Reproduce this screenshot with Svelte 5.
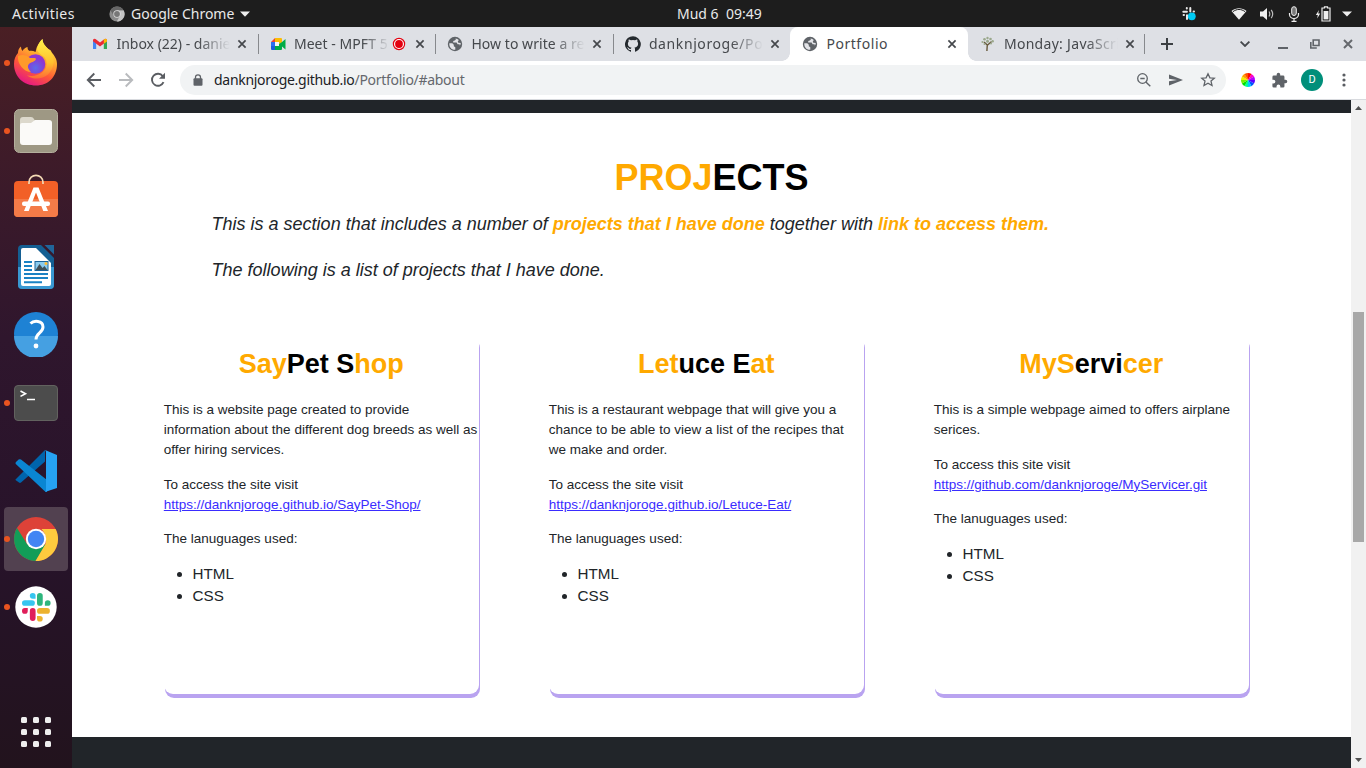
<script>
  const tabs = [
    { icon: 'gmail', title: 'Inbox (22) - danielk', ls: 0 },
    { icon: 'meet', title: 'Meet - MPFT 5', rec: true, ls: 0.05 },
    { icon: 'globe', title: 'How to write a rea', ls: 0.05 },
    { icon: 'github', title: 'danknjoroge/Port', ls: 0.6 },
    { icon: 'globe', title: 'Portfolio', active: true, ls: 0.55 },
    { icon: 'tree', title: 'Monday: JavaScri', ls: 0.3 }
  ];
  const dock = [
    { id: 'firefox', run: true },
    { id: 'files', run: true },
    { id: 'software' },
    { id: 'writer' },
    { id: 'help' },
    { id: 'terminal', run: true },
    { id: 'vscode' },
    { id: 'chrome', run: true, focus: true },
    { id: 'slack', run: true }
  ];
  const projects = [
    {
      title: ['Say', 'Pet S', 'hop'],
      text: 'This is a website page created to provide information about the different dog breeds as well as offer hiring services.',
      access: 'To access the site visit',
      url: 'https://danknjoroge.github.io/SayPet-Shop/'
    },
    {
      title: ['Let', 'uce E', 'at'],
      text: 'This is a restaurant webpage that will give you a chance to be able to view a list of the recipes that we make and order.',
      access: 'To access the site visit',
      url: 'https://danknjoroge.github.io/Letuce-Eat/'
    },
    {
      title: ['MyS', 'ervi', 'cer'],
      text: 'This is a simple webpage aimed to offers airplane serices.',
      access: 'To access this site visit',
      url: 'https://github.com/danknjoroge/MyServicer.git'
    }
  ];
  const wheel = ['#ff0000', '#ff00c8', '#b400ff', '#5a00ff', '#0050ff', '#00c8ff', '#00ff96', '#00e000', '#78f000', '#f0f000', '#ffa000', '#ff5000'];
  const wedge = (i) => {
    const a = (i * Math.PI) / 6 - Math.PI / 2;
    const b = a + Math.PI / 6 + 0.02;
    return `M8 8L${8 + 7 * Math.cos(a)} ${8 + 7 * Math.sin(a)}A7 7 0 0 1 ${8 + 7 * Math.cos(b)} ${8 + 7 * Math.sin(b)}Z`;
  };
</script>

{#snippet slackMark()}
  <g>
    <rect x="21" y="0" width="8" height="18" rx="4" fill="#2eb67d" />
    <path d="M32 14a4 4 0 1 1 4 4h-4z" fill="#2eb67d" />
    <rect x="21" y="21" width="18" height="8" rx="4" fill="#ecb22e" />
    <path d="M21 32h4a4 4 0 1 1-4 4z" fill="#ecb22e" />
    <rect x="11" y="21" width="8" height="18" rx="4" fill="#e01e5a" />
    <path d="M8 21v4a4 4 0 1 1-4-4z" fill="#e01e5a" />
    <rect x="0" y="10" width="18" height="8" rx="4" fill="#36c5f0" />
    <path d="M19 8h-4a4 4 0 1 1 4-4z" fill="#36c5f0" />
  </g>
{/snippet}

{#snippet closeX()}
  <svg class="x" viewBox="0 0 10 10" width="10" height="10"><path d="M1.400 1.400l7.200 7.200M8.600 1.400L1.400 8.600" stroke="#45484c" stroke-width="1.700" /></svg>
{/snippet}

<div class="desktop">
  <header class="topbar">
    <span class="activities">Activities</span>
    <svg class="appicon" viewBox="0 0 16 16" width="16" height="16">
      <circle cx="8" cy="8" r="7.600" fill="#8b8b8b" />
      <path d="M8 .4A7.600 7.600 0 0 0 1.400 4.200L5 10 8 4.400h6.700A7.600 7.600 0 0 0 8 .4z" fill="#666" />
      <path d="M14.800 4.600H8l3.200 5L7.800 15.600A7.600 7.600 0 0 0 14.800 4.600z" fill="#c4c4c4" />
      <circle cx="8" cy="8" r="3.700" fill="#ddd" /><circle cx="8" cy="8" r="2.900" fill="#777" />
    </svg>
    <span class="appname">Google Chrome</span>
    <svg class="caret" viewBox="0 0 10 6" width="10" height="6"><path d="M0 .5h10L5 5.700z" fill="#eee" /></svg>
    <span class="clock">Mud 6&nbsp; 09:49</span>
    <div class="status">
      <svg viewBox="0 0 16 16" width="16" height="16">
        <g fill="none" stroke="#e8e8e8" stroke-width="2" stroke-linecap="round"><path d="M5.800 2v.6M2.300 5.800h3.600M9.300 2v3.600M12.600 5.600h.4M2.600 9h.4M6 9.300v3.600M9.300 9H13" /></g>
        <circle cx="10.800" cy="10.300" r="3.900" fill="#00cbf5" />
      </svg>
      <svg viewBox="0 0 16 14" width="16" height="14"><path d="M.5 4C5 .2 11 .2 15.500 4L8 12.800z" fill="#f0f0f0" /><path d="M1.900 4.700c4-3 8.200-3 12.200 0" fill="none" stroke="#1d1d1d" stroke-width="1" /></svg>
      <svg viewBox="0 0 16 14" width="16" height="14"><path d="M1 4.500h3L8 1v12L4 9.500H1z" fill="#f0f0f0" /><path d="M10 4.500q1.600 2.500 0 5M12.200 2.800q3 4.200 0 8.400" fill="none" stroke="#bbb" stroke-width="1.200" /></svg>
      <svg viewBox="0 0 12 16" width="12" height="16"><rect x="3.700" y=".7" width="4.600" height="8.800" rx="2.300" fill="#777" stroke="#eee" /><path d="M1.500 7v1.500a4.500 4 0 0 0 9 0V7M6 12.500V15M3.500 15.300h5" fill="none" stroke="#eee" stroke-width="1.200" /></svg>
      <svg viewBox="0 0 16 16" width="16" height="16"><path d="M4 4L.8 9h2L2.200 12.500 5.200 7.600h-2z" fill="#eee" /><path d="M9.500 2V.8h3V2H15v13H7V2z" fill="none" stroke="#eee" stroke-width="1.200" /><rect x="8.600" y="5" width="4.800" height="8.400" fill="#eee" /></svg>
      <svg viewBox="0 0 10 6" width="10" height="6"><path d="M0 .5h10L5 5.500z" fill="#eee" /></svg>
    </div>
  </header>

  <div class="body">
    <nav class="dock">
      {#each dock as d}
        <div class="slot" class:focus={d.focus}>
          {#if d.run}<i class="dot"></i>{/if}
          {#if d.id === 'firefox'}
            <svg viewBox="0 0 46 48" width="46" height="48">
              <defs>
                <linearGradient id="ff" x1=".8" y1="0" x2=".3" y2="1"><stop offset="0" stop-color="#fff44f" /><stop offset=".35" stop-color="#ffb02e" /><stop offset=".65" stop-color="#ff5a36" /><stop offset="1" stop-color="#e31587" /></linearGradient>
                <linearGradient id="fy" x1=".5" y1="0" x2=".5" y2="1"><stop offset="0" stop-color="#fff24a" /><stop offset=".6" stop-color="#ffc02e" /><stop offset="1" stop-color="#ff6a35" /></linearGradient>
                <radialGradient id="fp" cx=".5" cy=".7"><stop offset="0" stop-color="#5a6bec" /><stop offset="1" stop-color="#8f35d0" /></radialGradient>
              </defs>
              <path d="M5 14c0-3 1-5 3-6.500 0 2 .5 3 1.500 4.500 1-2 3-3.500 5-4 0 2 .5 3 2 4 2-.5 4 0 6 1 1-6 4-10 7-13 0 5 3 7 6 10 2 1 2.500 1.500 3 3 3 4 5.500 7 5.500 12C44 38 35 46.500 23 46.500S1 38 1 25c0-5 1.500-8 4-11z" fill="url(#ff)" />
              <path d="M24 10c1-5 3-8 5.500-10 0 5 4 8 7.500 12 5.500 6 5 17-2 23.500-6 5-15 5.500-21 1 10 2 19-3 19.500-11 .5-5-2-8-5-9.500-2-1.500-4-3-4.500-6z" fill="url(#fy)" />
              <circle cx="22.500" cy="25" r="9.800" fill="url(#fp)" />
              <path d="M5 17c4-2 9-1 12 2 3 0 6-.5 6 1-1 3-5 3-7 5-2 2-1 5 2 8-7 0-14-8-13-16z" fill="#ff9a2a" />
            </svg>
          {:else if d.id === 'files'}
            <svg viewBox="0 0 46 46" width="46" height="46"><rect x="1.500" y="1.500" width="43" height="43" rx="5" fill="#9e9884" stroke="#b4af9d" /><path d="M7 12q0-3 3-3h8q2 0 3 2l1 2h14q3 0 3 3v18H7z" fill="#dcd8cc" /><path d="M7 17q0-2 2-2h9l4-3h14q3 0 3 3v19q0 3-3 3H10q-3 0-3-3z" fill="#fbfaf8" /></svg>
          {:else if d.id === 'software'}
            <svg class="up" viewBox="0 0 46 46" width="46" height="46"><rect x="1" y="8" width="44" height="36" rx="4" fill="#f26027" /><path d="M1 26h44v14q0 4-4 4H5q-4 0-4-4z" fill="#f47b48" /><path d="M16 11V9.500c0-9.500 14-9.500 14 0V11" fill="none" stroke="#f3d9b4" stroke-width="1.700" /><path d="M11 38L20.500 14.500h5L35 38h-4.700L23 19.500 15.700 38z" fill="#fff" /><rect x="9" y="28.500" width="28" height="4.500" rx="2" fill="#fff" /></svg>
          {:else if d.id === 'writer'}
            <svg viewBox="0 0 46 46" width="46" height="46"><path d="M9 1h19l13 13v27q0 4-4 4H9q-4 0-4-4V5q0-4 4-4z" fill="#145f93" /><path d="M5 23h36v18q0 4-4 4H9q-4 0-4-4z" fill="#3998d2" /><path d="M10 4h13l15 15v21q0 2-2 2H10q-2 0-2-2V6q0-2 2-2z" fill="#fff" /><path d="M31.500 1H41v9.500z" fill="#20659a" /><path d="M11 18h8M11 22h8M11 26h8M11 30h24M11 34h24M11 38.200h18" stroke="#1a82c4" stroke-width="1.900" /><rect x="22" y="17.500" width="13" height="9" fill="#8bcbee" stroke="#1b6499" /><path d="M22.500 26l4-6 3 4 2-2 3 4z" fill="#405058" /><circle cx="33" cy="19.500" r="1.500" fill="#fb3" /></svg>
          {:else if d.id === 'help'}
            <svg class="up1" viewBox="0 0 46 46" width="46" height="46"><circle cx="23" cy="23" r="22" fill="#1e82d4" /><path d="M1 25a22 22 0 0 0 44 0z" fill="#45a0e2" /><path d="M17.500 12.500c3-3 12.500-3.500 12.500 3.500 0 6-7 6-7 12.500" fill="none" stroke="#fff" stroke-width="3" /><circle cx="23" cy="35" r="2.400" fill="#fff" /></svg>
          {:else if d.id === 'terminal'}
            <svg viewBox="0 0 46 38" width="46" height="38"><rect x="1.500" y="1.500" width="43" height="35" rx="3.500" fill="#4c4c4c" stroke="#62625f" /><path d="M7.500 7l5 2.700-5 2.700" fill="none" stroke="#fff" stroke-width="1.600" /><path d="M14 15.500h8" stroke="#fff" stroke-width="1.500" /></svg>
          {:else if d.id === 'vscode'}
            <svg viewBox="0 0 44 44" width="44" height="44"><path d="M1.500 30.500L31 1v11.500L7 33.500q-1 .8-2 0L1.500 31z" fill="#0064ac" /><path d="M2 13l2.600-2.400q1.200-.8 2.400 0L33 31v12q-1.500 0-3-1.500L1.800 15q-.8-1 .2-2z" fill="#0a86d2" /><path d="M31 1l12 5v33l-12 4c1-1 1-2 1-3V4c0-1 0-2-1-3z" fill="#26a2f2" /></svg>
          {:else if d.id === 'chrome'}
            <svg viewBox="0 0 46 46" width="46" height="46"><circle cx="23" cy="23" r="22" fill="#dd4238" /><path d="M4 12A22 22 0 0 0 22.500 45L33 28 23 33 14 28z" fill="#129d58" /><path d="M42.600 13a22 22 0 0 1-20.100 32l10-17q2-8-4-15z" fill="#fecb3e" /><circle cx="23" cy="23" r="10.200" fill="#fff" /><circle cx="23" cy="23" r="8.200" fill="#4285f4" /></svg>
          {:else}
            <svg viewBox="0 0 46 46" width="46" height="46"><circle cx="23" cy="23" r="20.700" fill="#fff" /><g transform="translate(9 9) scale(.715)">{@render slackMark()}</g></svg>
          {/if}
        </div>
      {/each}
      <div class="slot apps">
        <div class="grid">{#each Array(9) as _}<i></i>{/each}</div>
      </div>
    </nav>

    <main class="browser">
      <div class="tabs">
        {#each tabs as t, i}
          <div class="tab" class:active={t.active} class:sep={i !== 3 && !t.active}>
            <svg class="fav" viewBox="0 0 16 16" width="16" height="16">
              {#if t.icon === 'gmail'}
                <path d="M1 4v9h3.200V7z" fill="#4285f4" /><path d="M15 4v9h-3.200V7z" fill="#34a853" /><path d="M1 4.500Q1 2 3.500 3L8 6.600 12.500 3Q15 2 15 4.500V5.300L8 10.600 1 5.300z" fill="#ea2b35" /><path d="M11.800 3.500Q15 1.500 15 4.500V5.500L11.800 7.800z" fill="#fbbc04" />
              {:else if t.icon === 'meet'}
                <path d="M1 6l4-4v4z" fill="#ea4335" /><path d="M5 2h6q1 0 1 1v3.500L9 8V6H5z" fill="#fbbc04" /><path d="M1 6h4v4H1z" fill="#2d6ff0" /><path d="M1 10h4v4H2q-1 0-1-1z" fill="#1a5fdb" /><path d="M5 10h4V8l3-2 3.500-3v10.500L12 10.500V13q0 1-1 1H5z" fill="#00ac47" /><path d="M5 6h4v4H5z" fill="#f4f5f7" />
              {:else if t.icon === 'globe'}
                <circle cx="8" cy="8" r="7.200" fill="#5f6368" /><path d="M2.300 7.200h3l1.500 1.500v1.600l1.500.9v2.500C4.500 14 2 11 2.300 7.200zM8.600 2.400q.8 1.600-.9 2.100L6.200 5v1.600h3.400l1 1.600h2v1.300q1.300-1 1.200-2.200l-1-.5q-2 .4-2-1.300l1-1.600Q10.500 2.500 8.600 2.400z" fill="#e3e4e8" />
              {:else if t.icon === 'github'}
                <path d="M8 .2a8 8 0 0 0-2.500 15.600c.4.1.5-.2.500-.4v-1.500c-2.200.5-2.700-1-2.700-1-.4-.9-.9-1.200-.9-1.200-.7-.5.1-.5.1-.5.800.1 1.200.8 1.200.8.700 1.200 1.900.9 2.300.7.100-.5.300-.9.500-1.100-1.800-.2-3.600-.9-3.600-4 0-.9.300-1.600.8-2.100-.1-.200-.400-1 .1-2.100 0 0 .7-.2 2.200.8a7.500 7.500 0 0 1 4 0c1.500-1 2.200-.8 2.200-.8.4 1.100.2 1.900.1 2.100.5.600.8 1.300.8 2.100 0 3.100-1.900 3.800-3.700 4 .3.300.600.8.600 1.500v2.200c0 .2.100.5.600.4A8 8 0 0 0 8 .2z" fill="#24292e" />
              {:else}
                <path d="M6.900 15l.4-6.500M7.300 9L4 6M7.600 9l4-3.500" stroke="#66583a" stroke-width="1.400" fill="none" /><g fill="#9aa88c"><circle cx="2.500" cy="6" r="1.100" /><circle cx="4.500" cy="3.300" r="1.300" /><circle cx="7.500" cy="2" r="1.200" /><circle cx="10.500" cy="3" r="1.300" /><circle cx="12.700" cy="5.300" r="1.200" /><circle cx="7.500" cy="5.200" r="1.500" /><circle cx="4.500" cy="8" r="1" /><circle cx="11" cy="7.600" r="1" /></g>
              {/if}
            </svg>
            <span class="title" class:short={t.rec} class:full={t.active} style="letter-spacing: {t.ls}px">{t.title}</span>
            {#if t.rec}<svg class="rec" viewBox="0 0 14 14" width="14" height="14"><circle cx="7" cy="7" r="5.600" fill="#fff" stroke="#e3000f" stroke-width="1.200" /><circle cx="7" cy="7" r="3.900" fill="#e3000f" /></svg>{/if}
            {@render closeX()}
          </div>
        {/each}
        <svg class="plus" viewBox="0 0 12 12" width="12" height="12"><path d="M6 0v12M0 6h12" stroke="#3c4043" stroke-width="2" /></svg>
        <div class="win">
          <svg viewBox="0 0 10 6" width="10" height="6"><path d="M.6.6L5 5 9.400.6" fill="none" stroke="#45484c" stroke-width="1.800" /></svg>
          <svg viewBox="0 0 10 12" width="10" height="12"><path d="M0 10h10" stroke="#5f6368" stroke-width="2" /></svg>
          <svg viewBox="0 0 10 10" width="10" height="10"><path d="M3.200 1H9v5.500H3.200zM.8 3v6h6" fill="none" stroke="#5f6368" stroke-width="1.600" /></svg>
          <svg viewBox="0 0 10 10" width="10" height="10"><path d="M1 1l8 8M9 1L1 9" stroke="#65686d" stroke-width="2" /></svg>
        </div>
      </div>

      <div class="toolbar">
        <svg class="nav" viewBox="0 0 16 16" width="16" height="16"><path d="M15 8H2M8.300 1.500L1.800 8l6.500 6.500" fill="none" stroke="#5a5d62" stroke-width="1.900" /></svg>
        <svg class="nav" viewBox="0 0 16 16" width="16" height="16"><path d="M1 8h13M7.700 1.500L14.200 8l-6.500 6.500" fill="none" stroke="#b9bbbe" stroke-width="1.900" /></svg>
        <svg class="nav" viewBox="0 0 16 16" width="16" height="16"><path d="M13.500 10.200A6 6 0 1 1 12.800 4.200L14 5.700" fill="none" stroke="#5a5d62" stroke-width="1.900" /><path d="M15 .8v6H9z" fill="#5a5d62" /></svg>
        <div class="omni">
          <svg viewBox="0 0 10 12" width="10" height="12"><rect x="0.500" y="4.200" width="9" height="7.600" rx="1" fill="#5f6368" /><path d="M2.500 5V3.200a2.500 2.400 0 0 1 5 0V5" fill="none" stroke="#5f6368" stroke-width="1.300" /></svg>
          <span class="url"><b>danknjoroge.github.io</b>/Portfolio/#about</span>
          <div class="acts">
            <svg viewBox="0 0 16 16" width="16" height="16"><circle cx="6.500" cy="6.500" r="4.800" fill="none" stroke="#5f6368" stroke-width="1.300" /><path d="M9.900 9.900L14.300 14.300M4.300 6.500h4.400" stroke="#5f6368" stroke-width="1.400" /></svg>
            <svg viewBox="0 0 16 16" width="16" height="16"><path d="M1 2.500L15 8 1 13.500V9.300L9 8 1 6.700z" fill="#5f6368" /></svg>
            <svg viewBox="0 0 16 16" width="16" height="16"><path d="M8 1.800l1.900 4 4.400.4-3.300 2.900 1 4.400L8 11.200l-4 2.300 1-4.400L1.700 6.200l4.400-.4z" fill="none" stroke="#5f6368" stroke-width="1.300" /></svg>
          </div>
        </div>
        <svg class="wheel" viewBox="0 0 16 16" width="16" height="16">{#each wheel as c, i}<path d={wedge(i)} fill={c} />{/each}</svg>
        <svg class="puzzle" viewBox="0 0 24 24" width="17" height="17"><path d="M20.500 11H19V7a2 2 0 0 0-2-2h-4V3.500a2.500 2.500 0 0 0-5 0V5H4a2 2 0 0 0-2 2v3.800h1.500a2.700 2.700 0 0 1 0 5.400H2V20a2 2 0 0 0 2 2h3.800v-1.500a2.700 2.700 0 0 1 5.400 0V22H17a2 2 0 0 0 2-2v-4h1.500a2.500 2.500 0 0 0 0-5z" fill="#5f6368" /></svg>
        <span class="avatar">D</span>
        <svg class="more" viewBox="0 0 4 14" width="4" height="14"><g fill="#5a5d62"><circle cx="2" cy="2" r="1.600" /><circle cx="2" cy="7" r="1.600" /><circle cx="2" cy="12" r="1.600" /></g></svg>
      </div>

      <div class="viewport">
        <div class="page">
          <section>
            <h1><em>PROJ</em>ECTS</h1>
            <p class="lead">This is a section that includes a number of <strong>projects that I have done</strong> together with <strong>link to access them.</strong></p>
            <p class="lead">The following is a list of projects that I have done.</p>
            <div class="cards">
              {#each projects as p}
                <article>
                  <h3><em>{p.title[0]}</em>{p.title[1]}<em>{p.title[2]}</em></h3>
                  <p>{p.text}</p>
                  <p>{p.access}<br /><a href={p.url}>{p.url}</a></p>
                  <p class="langs">The lanuguages used:</p>
                  <ul><li>HTML</li><li>CSS</li></ul>
                </article>
              {/each}
            </div>
          </section>
        </div>
        <div class="scroll">
          <svg viewBox="0 0 7 4" width="7" height="4"><path d="M0 4h7L3.500 0z" fill="#505050" /></svg>
          <div class="thumb"></div>
          <svg viewBox="0 0 7 4" width="7" height="4"><path d="M0 0h7L3.500 4z" fill="#505050" /></svg>
        </div>
      </div>
    </main>
  </div>
</div>

<style>
  :global(body) { overflow: hidden; }
  .desktop { width: 1366px; height: 768px; display: flex; flex-direction: column; overflow: hidden; font-family: "Noto Sans", "Open Sans", sans-serif; }
  svg { display: block; flex: none; }

  .topbar { flex: none; height: 27px; background: #1d1d1d; color: #e9e9e9; display: flex; align-items: center; font-size: 14px; white-space: pre; }
  .activities { margin-left: 12px; width: 97px; letter-spacing: 0.450px; }
  .appname { margin-left: 6px; width: 105px; }
  .caret { margin-left: 4px; }
  .clock { margin-left: 427px; width: 86px; }
  .status { margin-left: auto; margin-right: 14px; display: flex; align-items: center; }
  .status svg + svg { margin-left: 12px; }
  .status svg:nth-child(2) { margin-left: 34px; }
  .status svg:nth-child(4) { margin-left: 13px; }
  .status svg:nth-child(5) { margin-left: 15px; }
  .status svg:nth-child(6) { margin-left: 11px; }

  .body { flex: 1; display: flex; min-height: 0; }
  .dock { flex: none; width: 72px; box-sizing: border-box; padding: 4px; display: flex; flex-direction: column; gap: 4px; background: linear-gradient(180deg, #4a1f24 0%, #3b1a2a 22%, #2f162d 42%, #27132a 70%, #22131d 100%); }
  .slot { position: relative; flex: none; height: 64px; border-radius: 4px; display: flex; align-items: center; justify-content: center; }
  .slot.focus { background: #524150; }
  .up { margin-bottom: 6px; }
  .up1 { margin-bottom: 2px; }
  .dot { position: absolute; left: 0; top: 29px; width: 6px; height: 6px; border-radius: 50%; background: #e95420; }
  .apps { margin-top: auto; }
  .grid { display: grid; grid-template-columns: repeat(3, 6px); gap: 6px; }
  .grid i { width: 6px; height: 6px; border-radius: 1.500px; background: #eee; }

  .browser { flex: 1; display: flex; flex-direction: column; min-width: 0; background: #fff; }
  .tabs { flex: none; height: 34px; background: #dee0e5; display: flex; align-items: center; padding-left: 8.400px; }
  .tab { flex: none; width: 177.500px; height: 34px; box-sizing: border-box; padding: 0 10.500px 0 12px; display: flex; align-items: center; position: relative; color: #45484c; font-size: 14px; }
  .tab.sep::after { content: ""; position: absolute; right: -1px; top: 7px; width: 1px; height: 20px; background: #87898d; }
  .tab.sep:nth-child(6)::after { right: 0; }
  .tab.active { background: #fff; border-radius: 8px 8px 0 0; }
  .tab.active::before, .tab.active::after { content: ""; position: absolute; bottom: 0; width: 8px; height: 8px; }
  .tab.active::before { left: -8px; background: radial-gradient(circle at 0 0, transparent 7.500px, #fff 8px); }
  .tab.active::after { right: -8px; background: radial-gradient(circle at 100% 0, transparent 7.500px, #fff 8px); }
  .title { margin-left: 8px; width: 116px; flex: none; overflow: hidden; white-space: nowrap; position: relative; top: -1px; -webkit-mask-image: linear-gradient(90deg, #000 82px, transparent 114px); mask-image: linear-gradient(90deg, #000 82px, transparent 114px); }
  .title.short { width: 96px; -webkit-mask-image: linear-gradient(90deg, #000 68px, transparent 96px); mask-image: linear-gradient(90deg, #000 68px, transparent 96px); }
  .title.full { -webkit-mask-image: none; mask-image: none; }
  .x { margin-left: auto; }
  .rec { margin-left: 2px; }
  .plus { margin-left: 15.500px; }
  .win { margin-left: auto; margin-right: 13px; display: flex; align-items: center; gap: 23px; }
  .win svg:nth-child(2) { margin-left: 5px; }
  .win svg:nth-child(3) { margin-left: -1px; }

  .toolbar { flex: none; height: 39px; box-sizing: border-box; border-bottom: 1px solid #d8dade; display: flex; align-items: center; padding-left: 14px; }
  .nav + .nav { margin-left: 16px; }
  .omni { margin-left: 14px; width: 1046px; height: 30px; box-sizing: border-box; border-radius: 15px; background: #f1f3f4; display: flex; align-items: center; padding: 0 10px 0 13px; }
  .url { margin-left: 11px; font-size: 14px; letter-spacing: -0.290px; color: #65686d; white-space: nowrap; position: relative; top: -1px; }
  .url b { font-weight: 400; color: #202124; }
  .acts { margin-left: auto; display: flex; gap: 16px; }
  .wheel { margin-left: 14px; }
  .puzzle { margin-left: 15px; }
  .avatar { margin-left: 13px; width: 22px; height: 22px; border-radius: 50%; background: #008f7a; color: #fff; font: 11px/22px Roboto, sans-serif; text-align: center; }
  .more { margin-left: 19px; }

  .viewport { flex: 1; display: flex; min-height: 0; }
  .page { flex: 1; background: #212529; padding-top: 13px; color: #212529; font-family: "Liberation Sans", Arial, sans-serif; }
  section { height: 624px; box-sizing: border-box; background: #fff; padding-top: 43px; }
  h1, h3 { margin: 0; text-align: center; color: #000; line-height: 1.2; font-weight: 700; }
  h1 { font-size: 36px; margin-bottom: 12px; }
  h1 em, h3 em { font-style: normal; color: #ffa900; }
  .lead { margin: 0 0 19px 139.600px; font-size: 18px; line-height: 27px; font-style: italic; }
  .lead strong { color: #ffa900; }
  .cards { display: flex; gap: 70px; margin: 51px 0 0 91.800px; }
  article { width: 315px; height: 359px; box-sizing: border-box; padding-top: 13px; border-radius: 9px; background: #fff; box-shadow: 1px 4px #b9a3f0; }
  h3 { font-size: 27px; margin-bottom: 19.500px; }
  article p { margin: 0 0 14.400px; font-size: 13.500px; line-height: 20.100px; }
  article .langs { margin-bottom: 13.400px; }
  a { color: #3a2cff; text-decoration: underline; }
  ul { margin: 0; padding-left: 28.800px; font-size: 15.200px; line-height: 22px; }

  .scroll { flex: none; width: 15px; background: #f1f1f1; display: flex; flex-direction: column; align-items: center; padding: 6px 0; box-sizing: border-box; }
  .thumb { width: 11px; height: 230px; background: #a8a8a8; margin: 202px 0 auto; }
</style>
